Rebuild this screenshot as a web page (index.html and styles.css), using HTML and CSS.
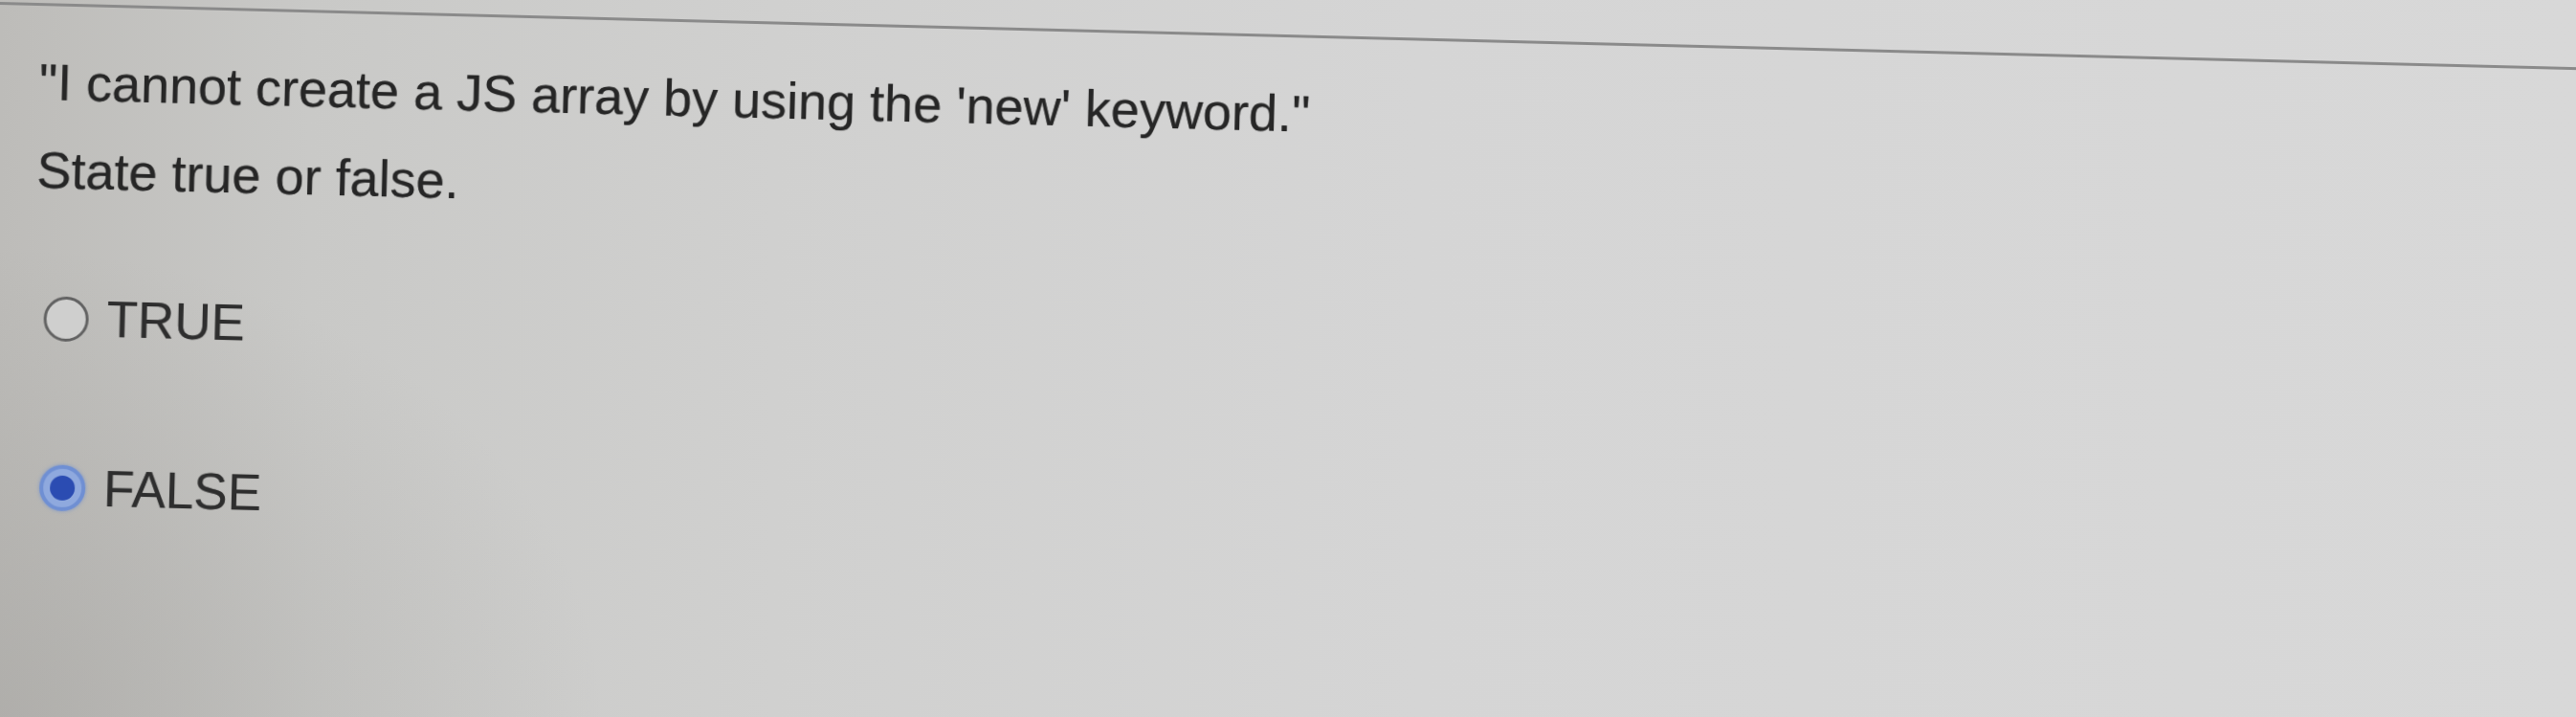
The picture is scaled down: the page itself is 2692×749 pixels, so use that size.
FILE: index.html
```html
<!DOCTYPE html>
<html lang="en">
<head>
<meta charset="utf-8">
<title>Question</title>
<link rel="stylesheet" href="styles.css">
</head>
<body>
<div class="sheet">
  <div class="panel">
    <div class="question">
      <p class="q-line">"I cannot create a JS array by using the 'new' keyword."</p>
      <p class="q-line">State true or false.</p>
    </div>
    <div class="options">
      <label class="option option-true">
        <span class="radio"></span>
        <span class="label-text">TRUE</span>
      </label>
      <label class="option option-false">
        <span class="radio radio-checked"><span class="dot"></span></span>
        <span class="label-text">FALSE</span>
      </label>
    </div>
  </div>
</div>
</body>
</html>
```

FILE: styles.css
```css
html, body {
  margin: 0;
  padding: 0;
  width: 2692px;
  height: 749px;
  overflow: hidden;
}

body {
  background:
    radial-gradient(ellipse 900px 700px at 0% 100%, rgba(150,148,144,0.35), rgba(150,148,144,0) 70%),
    linear-gradient(to right, #bdbcb9 0%, #c9c9c7 12%, #d0d0cf 30%, #d5d5d5 55%, #d8d8d8 100%);
  font-family: "Liberation Sans", Arial, sans-serif;
  color: #262626;
}

.sheet {
  width: 2800px;
  transform: rotate(1.45deg);
  transform-origin: 0 0;
  filter: blur(0.7px);
}

.panel {
  margin-top: 2px;
  border-top: 3px solid #8a8a8a;
  padding: 33px 0 0 43px;
}

.question {
  display: flex;
  flex-direction: column;
}

.q-line {
  margin: 0;
  font-size: 54px;
  line-height: 92px;
  white-space: nowrap;
  text-shadow: 0 0 1px rgba(30,30,30,0.6);
}

.options {
  display: flex;
  flex-direction: column;
  padding-left: 11px;
  margin-top: 79px;
}

.option {
  display: flex;
  align-items: center;
  height: 60px;
  gap: 19px;
}

.option-false {
  margin-top: 117px;
}

.label-text {
  font-size: 53px;
  line-height: 60px;
  color: #2e2e2e;
  text-shadow: 0 0 1px rgba(30,30,30,0.5);
}

.radio {
  box-sizing: border-box;
  width: 47px;
  height: 47px;
  border-radius: 50%;
  border: 3px solid #626262;
  background: #cfcfce;
  display: flex;
  align-items: center;
  justify-content: center;
}

.radio-checked {
  width: 48px;
  height: 48px;
  border: 4px solid #6f8fd3;
  background: #8fa9de;
  box-shadow: 0 0 4px rgba(90,130,210,0.6);
}

.dot {
  width: 26px;
  height: 26px;
  border-radius: 50%;
  background: #2b4cb2;
}
```
